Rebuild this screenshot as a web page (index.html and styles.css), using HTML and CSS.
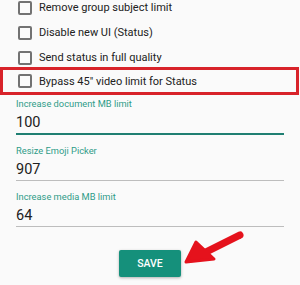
FILE: index.html
```html
<!DOCTYPE html>
<html lang="en">

<head>
    <meta charset="UTF-8">
    <meta name="viewport" content="width=device-width, initial-scale=1.0">
    <title>Settings</title>
    <link rel="stylesheet" href="styles.css">
</head>

<body>
    <!-- Toggle options -->
    <div class="options">
        <label class="option"><span class="box"></span>Remove group subject limit</label>
        <label class="option"><span class="box"></span>Disable new UI (Status)</label>
        <label class="option"><span class="box"></span>Send status in full quality</label>
        <label class="option highlight"><span class="box"></span>Bypass 45" video limit for Status</label>
    </div>

    <!-- Number fields -->
    <div class="fields">
        <div class="field focused">
            <div class="field-label">Increase document MB limit</div>
            <div class="field-value">100</div>
        </div>
        <div class="field">
            <div class="field-label">Resize Emoji Picker</div>
            <div class="field-value">907</div>
        </div>
        <div class="field">
            <div class="field-label">Increase media MB limit</div>
            <div class="field-value">64</div>
        </div>
    </div>

    <div class="actions">
        <button class="save">SAVE</button>
    </div>

    <!-- Pointer arrow drawn over the page -->
    <svg class="arrow" width="300" height="285" viewBox="0 0 300 285">
        <line x1="240" y1="235" x2="202" y2="254" stroke="#e5121c" stroke-width="7" stroke-linecap="round" />
        <path d="M186 262 L196 242 L214 259 Z" fill="#e5121c" stroke="#e5121c" stroke-width="3" stroke-linejoin="round" />
    </svg>
</body>

</html>
```

FILE: styles.css
```css
body {
    margin: 0;
    width: 300px;
    height: 285px;
    overflow: hidden;
    background-color: #fafafa;
    font-family: 'Roboto', 'Liberation Sans', sans-serif;
    color: #212121;
    position: relative;
}

.options {
    margin-top: -5px;
}

.option {
    display: flex;
    align-items: center;
    height: 25px;
    padding-left: 18px;
    font-size: 11px;
}

.box {
    width: 10px;
    height: 10px;
    border: 2px solid #727272;
    border-radius: 2px;
    margin-right: 7px;
    flex-shrink: 0;
}

.option.highlight {
    height: 22px;
    margin-top: -3px;
    border: 3px solid #d8232a;
    padding-left: 15px;
    margin-right: 1px;
}

.fields {
    padding: 0 16px;
    margin-top: 3px;
}

.field {
    border-bottom: 1px solid #bdbdbd;
    margin-bottom: 10px;
}

.field.focused {
    border-bottom: 2px solid #1f7f72;
}

.field-label {
    font-size: 9.3px;
    line-height: 12px;
    color: #2f9c88;
}

.field-value {
    font-size: 14.5px;
    line-height: 20px;
    padding-top: 3px;
    color: #212121;
}

.actions {
    display: flex;
    justify-content: center;
    margin-top: 23px;
}

.save {
    width: 62px;
    height: 27px;
    border: none;
    border-radius: 2px;
    background-color: #15907b;
    color: #fff;
    font-family: 'Roboto', 'Liberation Sans', sans-serif;
    font-size: 10.5px;
    font-weight: 500;
    box-shadow: 0 1px 3px rgba(0, 0, 0, 0.3);
}

.arrow {
    position: absolute;
    left: 0;
    top: 0;
}
```
